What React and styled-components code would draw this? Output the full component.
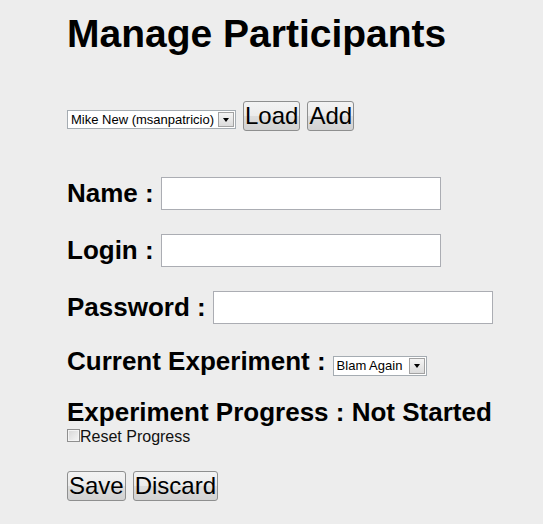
import React from "react";
import styled, { createGlobalStyle } from "styled-components";

const GlobalStyle = createGlobalStyle`
    html, body {
        margin: 0;
        padding: 0;
        background: #ededed;
    }
    body {
        font-family: "Liberation Sans", Arial, sans-serif;
        color: #000000;
    }
`;

const Page = styled.div`
    min-height: 524px;
    padding: 0 0 0 67px;
    box-sizing: border-box;
    background: #ededed;
`;

const Title = styled.h1`
    margin: 11px 0 0;
    font-size: 39px;
    line-height: 45px;
    font-weight: bold;
`;

const Toolbar = styled.div`
    margin-top: 45px;
    height: 30px;
    display: flex;
    align-items: flex-end;
    gap: 7px;
`;

const SelectBox = styled.label`
    display: inline-flex;
    align-items: center;
    width: ${(p) => p.$width}px;
    height: ${(p) => p.$height}px;
    box-sizing: border-box;
    border: 1px solid #a5acb2;
    background: #ffffff;
    margin-bottom: ${(p) => p.$drop || 0}px;
`;

const NativeSelect = styled.select`
    appearance: none;
    -webkit-appearance: none;
    flex: 1;
    min-width: 0;
    height: 100%;
    border: none;
    outline: none;
    background: transparent;
    padding: 0 0 0 3px;
    margin: 0;
    font-family: "Liberation Sans", Arial, sans-serif;
    font-size: 13px;
    color: #000000;
`;

const ArrowBox = styled.span`
    width: 16px;
    height: calc(100% - 2px);
    margin-right: 1px;
    box-sizing: border-box;
    border: 1px solid #a2a2a2;
    background: linear-gradient(#f4f4f4, #dcdcdc);
    display: flex;
    align-items: center;
    justify-content: center;
    &::after {
        content: "";
        border-left: 3.5px solid transparent;
        border-right: 3.5px solid transparent;
        border-top: 4px solid #000000;
        margin-top: 1px;
    }
`;

const Button = styled.button`
    height: 30px;
    padding: 0 1px;
    border: 1px solid #8e8f8f;
    border-radius: 3px;
    background: linear-gradient(#f3f3f3, #ebebeb 50%, #dddddd 50%, #d2d2d2);
    font-family: "Liberation Sans", Arial, sans-serif;
    font-size: 24px;
    line-height: 28px;
    color: #000000;
    cursor: pointer;
`;

const Form = styled.form`
    margin-top: 46px;
    display: flex;
    flex-direction: column;
`;

const FieldRow = styled.div`
    display: flex;
    align-items: center;
    gap: 7px;
    height: 32px;
    & + & {
        margin-top: 25px;
    }
`;

const Label = styled.span`
    font-size: 26px;
    font-weight: bold;
    line-height: 30px;
    white-space: nowrap;
`;

const TextInput = styled.input`
    width: 280px;
    height: 33px;
    box-sizing: border-box;
    border: 1px solid #abadb3;
    background: #ffffff;
    margin: 0;
    padding: 2px 4px;
    font-family: "Liberation Sans", Arial, sans-serif;
    font-size: 16px;
`;

const BaselineRow = styled.div`
    display: flex;
    align-items: baseline;
    gap: 7px;
    margin-top: ${(p) => p.$top}px;
`;

const CheckRow = styled.label`
    display: flex;
    align-items: flex-start;
    margin-top: 1px;
    font-size: 16px;
    line-height: 18px;
    color: #111111;
`;

const Checkbox = styled.input`
    appearance: none;
    -webkit-appearance: none;
    width: 13px;
    height: 13px;
    margin: 1px 0 0;
    box-sizing: border-box;
    border: 1px solid #8f8f8f;
    background: linear-gradient(135deg, #d6d6d6, #f6f6f6);
    box-shadow: inset 0 0 0 1px #f4f4f4;
`;

const Actions = styled.div`
    margin-top: 25px;
    display: flex;
    gap: 7px;
`;

const fields = [
    { label: "Name :", type: "text" },
    { label: "Login :", type: "text" },
    { label: "Password :", type: "password" },
];

function App() {
    return (
        <Page>
            <GlobalStyle />
            <Title>Manage Participants</Title>
            <Toolbar>
                <SelectBox $width={169} $height={19} $drop={2}>
                    <NativeSelect defaultValue="msanpatricio">
                        <option value="msanpatricio">Mike New (msanpatricio)</option>
                    </NativeSelect>
                    <ArrowBox />
                </SelectBox>
                <Button type="button">Load</Button>
                <Button type="button">Add</Button>
            </Toolbar>
            <Form onSubmit={(e) => e.preventDefault()}>
                {fields.map((f) => (
                    <FieldRow key={f.label}>
                        <Label>{f.label}</Label>
                        <TextInput type={f.type} />
                    </FieldRow>
                ))}
                <BaselineRow $top={23}>
                    <Label>Current Experiment :</Label>
                    <SelectBox $width={94} $height={20}>
                        <NativeSelect defaultValue="blam">
                            <option value="blam">Blam Again</option>
                        </NativeSelect>
                        <ArrowBox />
                    </SelectBox>
                </BaselineRow>
                <BaselineRow $top={21}>
                    <Label>Experiment Progress : Not Started</Label>
                </BaselineRow>
                <CheckRow>
                    <Checkbox type="checkbox" />
                    Reset Progress
                </CheckRow>
                <Actions>
                    <Button type="submit">Save</Button>
                    <Button type="button">Discard</Button>
                </Actions>
            </Form>
        </Page>
    );
}

export default App;
